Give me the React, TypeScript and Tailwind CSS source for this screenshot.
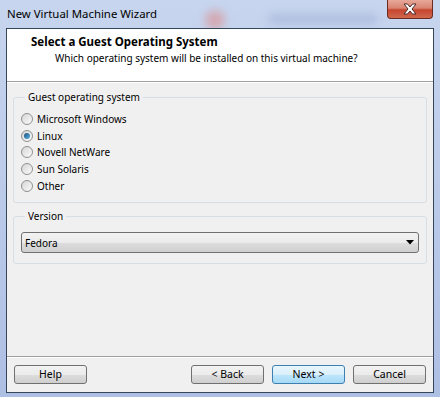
import React, { useState } from "react";

const osList = ["Microsoft Windows", "Linux", "Novell NetWare", "Sun Solaris", "Other"];

function Radio({ checked }: { checked: boolean }) {
  return (
    <span className="w-[12px] h-[12px] rounded-full border border-[#8f9090] bg-gradient-to-br from-[#d6d6d6] to-[#fbfbfb] flex items-center justify-center shrink-0">
      {checked && (
        <span className="w-[6px] h-[6px] rounded-full bg-gradient-to-br from-[#1b4f7c] to-[#5bb8e6]" />
      )}
    </span>
  );
}

function WinButton({ label, primary }: { label: string; primary?: boolean }) {
  return (
    <button
      className={
        primary
          ? "w-[73px] h-[19px] rounded-[3px] border border-[#3c7fb1] bg-[linear-gradient(#eaf6fd_0%,#d9f0fc_50%,#bee6fd_51%,#a7d9f5_100%)] text-[10.5px] leading-none text-black"
          : "w-[73px] h-[19px] rounded-[3px] border border-[#707070] bg-[linear-gradient(#f2f2f2_0%,#ebebeb_50%,#dddddd_51%,#cfcfcf_100%)] text-[10.5px] leading-none text-black"
      }
    >
      {label}
    </button>
  );
}

export default function App() {
  const [os, setOs] = useState("Linux");

  return (
    <div className="w-[440px] h-[397px] relative overflow-hidden bg-gradient-to-b from-[#c7d5ee] to-[#aebfe4] font-['Noto_Sans',sans-serif] text-[10px] text-black">
      {/* blurred desktop behind the glass frame */}
      <div className="absolute left-[205px] top-[10px] w-[20px] h-[20px] rounded-full bg-[#d9989c] blur-[4px] opacity-70" />
      <div className="absolute left-[268px] top-[14px] w-[110px] h-[10px] rounded-full bg-[#9fb0d4] blur-[4px] opacity-60" />

      {/* Title bar */}
      <div className="relative h-[28px] flex items-center pl-[7px] text-[11.4px]">
        New Virtual Machine Wizard
      </div>

      {/* Close button */}
      <div className="absolute left-[387px] top-0 w-[46px] h-[19px] rounded-b-[4px] border border-t-0 border-[#6d2a20] bg-[linear-gradient(#e8a89a_0%,#d88471_45%,#c7452f_55%,#d06a4d_100%)] flex items-center justify-center">
        <svg width="14" height="12" viewBox="0 0 14 12">
          <path
            d="M1 1 H4.5 L7 4 L9.5 1 H13 L9 6 L13 11 H9.5 L7 8 L4.5 11 H1 L5 6 Z"
            fill="#ffffff"
            stroke="#4a2a2a"
            strokeWidth="1"
            strokeLinejoin="round"
          />
        </svg>
      </div>

      {/* Client area */}
      <div className="relative ml-[6px] w-[428px] h-[365px] border border-[#34465c] bg-[#f0f0f0] flex flex-col">
        {/* Header */}
        <div className="h-[53px] bg-white border-b border-[#a0a0a0] pl-[24px] pt-[5px]">
          <div className="font-bold text-[11.5px] leading-[16px]">Select a Guest Operating System</div>
          <div className="pl-[24px] leading-[16px]">Which operating system will be installed on this virtual machine?</div>
        </div>
        <div className="h-px bg-white" />

        {/* Body */}
        <div className="flex-1 px-[6px] pt-[7px] flex flex-col gap-[6px]">
          <fieldset className="border border-[#d5dfe5] rounded-[3px] px-[7px] pb-[8px] pt-[6.5px]">
            <legend className="ml-[4px] px-[3px] leading-[14px]">Guest operating system</legend>
            {osList.map((name) => (
              <label
                key={name}
                className="h-[16.75px] flex items-center gap-[4px] cursor-default"
                onClick={() => setOs(name)}
              >
                <Radio checked={os === name} />
                <span className="leading-none">{name}</span>
              </label>
            ))}
          </fieldset>

          <fieldset className="border border-[#d5dfe5] rounded-[3px] px-[7px] pb-[10px] pt-[9px]">
            <legend className="ml-[4px] px-[3px] leading-[14px]">Version</legend>
            <div className="h-[21px] rounded-[3px] border border-[#707070] bg-[linear-gradient(#f2f2f2_0%,#ebebeb_50%,#dddddd_51%,#cfcfcf_100%)] flex items-center justify-between pl-[3px] pr-[4px]">
              <span className="leading-none">Fedora</span>
              <svg width="8" height="5" viewBox="0 0 8 5">
                <path d="M0 0 H8 L4 4.5 Z" fill="#000" />
              </svg>
            </div>
          </fieldset>
        </div>

        {/* Footer */}
        <div className="h-px bg-[#a0a0a0]" />
        <div className="h-px bg-white" />
        <div className="h-[34px] flex items-start pt-[7px] px-[7px]">
          <WinButton label="Help" />
          <div className="flex-1" />
          <div className="flex gap-[8px]">
            <WinButton label="< Back" />
            <WinButton label="Next >" primary />
            <WinButton label="Cancel" />
          </div>
        </div>
      </div>
    </div>
  );
}
